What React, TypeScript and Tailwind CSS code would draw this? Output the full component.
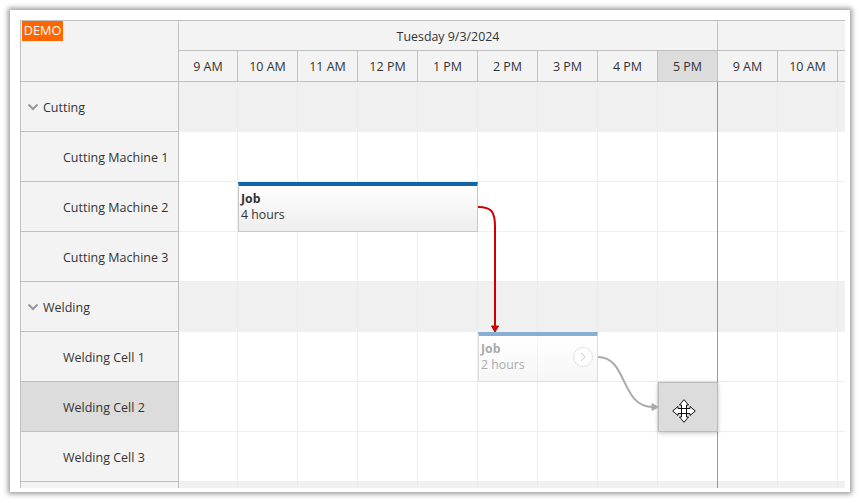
import React from "react";

const hours = ["9 AM", "10 AM", "11 AM", "12 PM", "1 PM", "2 PM", "3 PM", "4 PM", "5 PM", "9 AM", "10 AM", ""];

const rows = [
  { name: "Cutting", group: true },
  { name: "Cutting Machine 1" },
  { name: "Cutting Machine 2" },
  { name: "Cutting Machine 3" },
  { name: "Welding", group: true },
  { name: "Welding Cell 1" },
  { name: "Welding Cell 2", selected: true },
  { name: "Welding Cell 3" },
  { name: "", group: true },
];

const Chevron = () => (
  <svg width="12" height="8" viewBox="0 0 12 8" className="mr-[4px] -mt-[3px]">
    <path d="M1.5 1.5 L6 6 L10.5 1.5" fill="none" stroke="#999999" strokeWidth="2" />
  </svg>
);

const Row = ({ name, group, selected }: { name: string; group?: boolean; selected?: boolean }) => (
  <div className="flex h-[50px] shrink-0">
    <div
      className={`w-[159px] shrink-0 flex items-center pt-[3px] border-l border-r border-b border-[#c0c0c0] ${
        selected ? "bg-[#dcdcdc]" : "bg-[#f3f3f3]"
      } ${group ? "pl-[6px]" : "pl-[42px]"}`}
    >
      {group && name && <Chevron />}
      {name}
    </div>
    {hours.map((_, i) => (
      <div
        key={i}
        className={`shrink-0 border-r ${i === 0 ? "w-[59px]" : "w-[60px]"} ${
          group ? "bg-[#f0f0f0] border-[#ececec]" : "border-b border-[#eeeeee] bg-white"
        }`}
      />
    ))}
  </div>
);

const MoveCursor = () => (
  <svg width="24" height="24" viewBox="0 0 24 24">
    <path
      d="M12 .7 L16.5 6 L14.5 6 L14.5 9.5 L18 9.5 L18 7.5 L23.3 12 L18 16.5 L18 14.5 L14.5 14.5 L14.5 18 L16.5 18 L12 23.3 L7.5 18 L9.5 18 L9.5 14.5 L6 14.5 L6 16.5 L.7 12 L6 7.5 L6 9.5 L9.5 9.5 L9.5 6 L7.5 6 Z"
      fill="#ffffff"
      stroke="#111111"
      strokeWidth="1"
    />
    <path d="M9.5 6 L9.5 18 M14.5 6 L14.5 18 M6 9.5 L18 9.5 M6 14.5 L18 14.5" stroke="#111111" strokeWidth="1" fill="none" />
  </svg>
);

export default function App() {
  return (
    <div className="w-[860px] h-[503px] bg-white pl-[10px] pt-[10px] overflow-hidden">
      <div className="w-[840px] h-[482px] bg-white pl-[10px] pt-[10px] shadow-[0_0_5px_2px_rgba(0,0,0,0.4)]">
        <div
          className="relative w-[825px] h-[468px] overflow-hidden text-[12.5px] text-[#333333]"
          style={{ fontFamily: '"Open Sans", "Noto Sans", sans-serif' }}
        >
          {/* header */}
          <div className="flex h-[62px]">
            <div className="w-[159px] shrink-0 bg-[#f3f3f3] border-l border-r border-t border-b border-[#c0c0c0]" />
            <div className="flex-1 flex flex-col">
              <div className="flex h-[31px] shrink-0">
                <div className="w-[539px] shrink-0 flex items-center justify-center pt-[3px] bg-[#f3f3f3] border-t border-r border-b border-[#c0c0c0] text-[12.4px]">
                  Tuesday 9/3/2024
                </div>
                <div className="w-[180px] shrink-0 bg-[#f3f3f3] border-t border-b border-[#c0c0c0]" />
              </div>
              <div className="flex h-[31px] shrink-0">
                {hours.map((h, i) => (
                  <div
                    key={i}
                    className={`shrink-0 flex items-center justify-center pt-[3px] border-r border-b border-[#c0c0c0] text-[12.5px] ${
                      i === 0 ? "w-[59px]" : "w-[60px]"
                    } ${i === 8 ? "bg-[#dcdcdc]" : "bg-[#f3f3f3]"}`}
                  >
                    {h}
                  </div>
                ))}
              </div>
            </div>
          </div>

          {/* rows */}
          <div className="flex flex-col">
            {rows.map((r, i) => (
              <Row key={i} name={r.name} group={r.group} selected={r.selected} />
            ))}
          </div>

          {/* demo badge */}
          <div className="absolute left-[2px] top-[1px] w-[41px] h-[20px] bg-[#ff6600] text-white text-[12.7px] flex items-center justify-center">
            DEMO
          </div>

          {/* dark separator */}
          <div className="absolute left-[697px] top-[62px] w-px h-[406px] bg-[#999999]" />

          {/* job 1 */}
          <div className="absolute left-[218px] top-[162px] w-[240px] h-[50px] border-l border-r border-b border-[#c8c8c8] bg-gradient-to-b from-white to-[#eeeeee] border-t-4 border-t-[#1066a8] pl-[2px] pt-[5px] leading-[16px] text-[12.3px]">
            <div className="font-bold">Job</div>
            <div>4 hours</div>
          </div>

          {/* job 2, being dragged */}
          <div className="absolute left-[458px] top-[312px] w-[120px] h-[50px] border-l border-r border-b border-[#dddddd] bg-gradient-to-b from-white/40 to-[#eeeeee]/50 border-t-4 border-t-[#85b0d4] pl-[2px] pt-[5px] leading-[16px] text-[12.3px] text-[#aaaaaa]">
            <div className="font-bold">Job</div>
            <div>2 hours</div>
            <div className="absolute right-[4px] top-[11px] w-[20px] h-[20px] rounded-full border border-[#e2e2e2] bg-white flex items-center justify-center">
              <svg width="8" height="10" viewBox="0 0 8 10">
                <path d="M2 1 L6 5 L2 9" fill="none" stroke="#cccccc" strokeWidth="1" />
              </svg>
            </div>
          </div>

          {/* drop target */}
          <div className="absolute left-[638px] top-[362px] w-[60px] h-[50px] bg-[#dcdcdc] border border-[#bbbbbb] shadow-[0_1px_4px_rgba(0,0,0,0.25)] flex items-center justify-center pr-[8px] pt-[8px]">
            <MoveCursor />
          </div>

          {/* links */}
          <svg className="absolute left-0 top-0 pointer-events-none" width="825" height="468">
            <path d="M458 187 C472 187 475 192 475 207 L475 307" fill="none" stroke="#cc0000" strokeWidth="2" />
            <path d="M471.5 306 L478.5 306 L475 312 Z" fill="#cc0000" stroke="#cc0000" strokeWidth="1" />
            <path d="M578 337 C608 337 600 387 633 387" fill="none" stroke="#aaaaaa" strokeWidth="2" />
            <path d="M632 383.5 L638 387 L632 390.5 Z" fill="#aaaaaa" stroke="#aaaaaa" strokeWidth="1" />
          </svg>
        </div>
      </div>
    </div>
  );
}
